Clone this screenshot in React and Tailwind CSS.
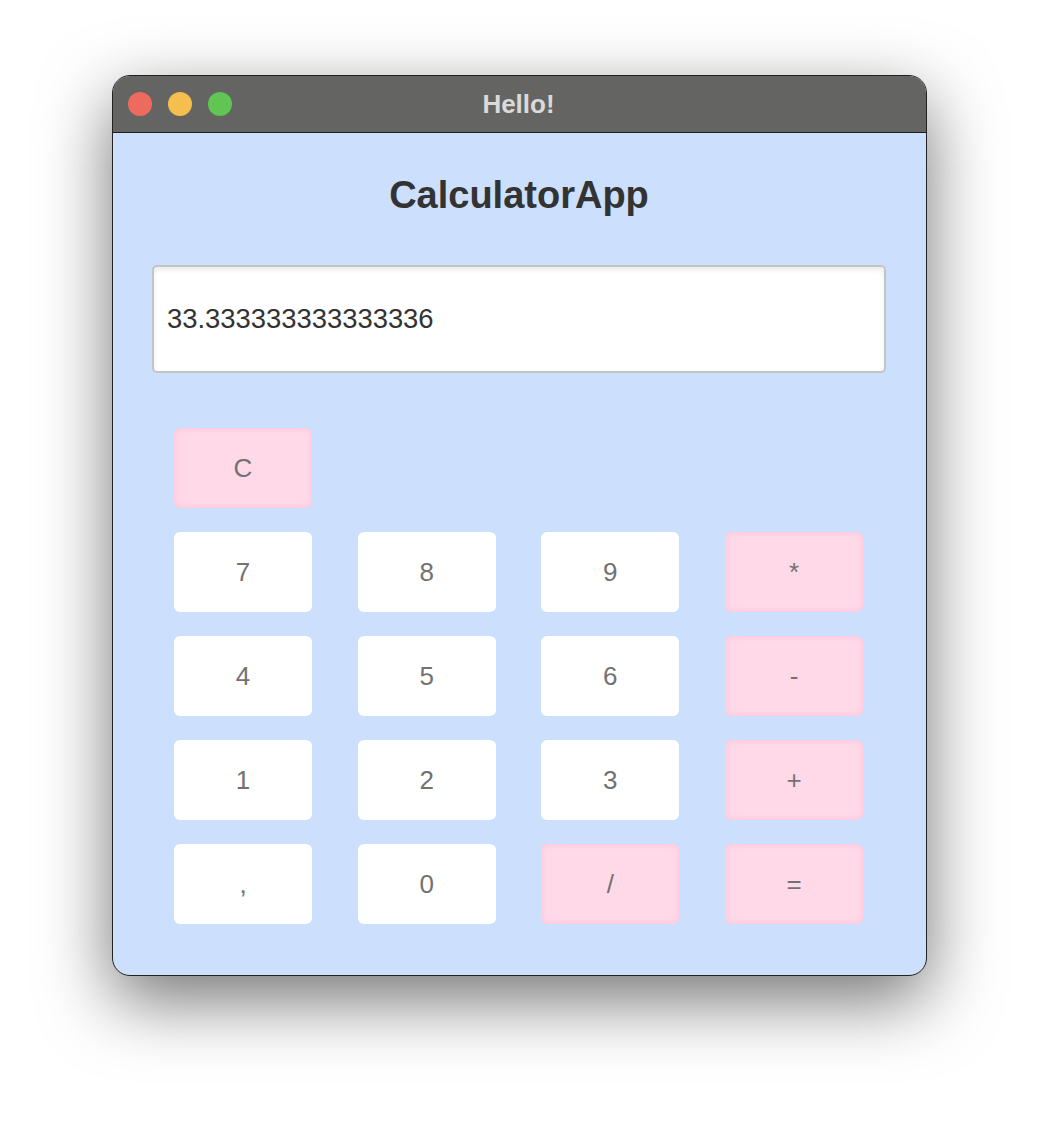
import React from "react";

const keys = [
  ["C", "op"],
  null,
  null,
  null,
  ["7", "num"],
  ["8", "num"],
  ["9", "num"],
  ["*", "op"],
  ["4", "num"],
  ["5", "num"],
  ["6", "num"],
  ["-", "op"],
  ["1", "num"],
  ["2", "num"],
  ["3", "num"],
  ["+", "op"],
  [",", "num"],
  ["0", "num"],
  ["/", "op"],
  ["=", "op"],
];

function Key({ label, kind }) {
  const base =
    "h-[80px] w-[138px] rounded-[6px] flex items-center justify-center text-[26px] text-[#727272]";
  if (kind === "op") {
    return (
      <div className={base + " bg-[#ffd9e8] shadow-[inset_0_0_6px_rgba(255,190,215,0.9)]"}>
        {label}
      </div>
    );
  }
  return <div className={base + " bg-white"}>{label}</div>;
}

function App() {
  return (
    <div
      className="w-[1038px] h-[1124px] bg-white pt-[75px] pl-[112px]"
      style={{ fontFamily: "'Liberation Sans', Arial, sans-serif" }}
    >
      <div className="w-[815px] h-[901px] rounded-[18px] border border-[#222] overflow-hidden bg-[#cce0fe] shadow-[0_24px_70px_rgba(0,0,0,0.55)] flex flex-col">
        <div className="h-[57px] bg-[#646462] border-b border-[#1e1e1e] relative flex items-center justify-center">
          <div className="absolute left-[15px] top-[16px] flex gap-[16px]">
            <div className="w-[24px] h-[24px] rounded-full bg-[#ee6a5e]" />
            <div className="w-[24px] h-[24px] rounded-full bg-[#f5bf4f]" />
            <div className="w-[24px] h-[24px] rounded-full bg-[#61c554]" />
          </div>
          <span className="text-[26px] font-bold text-[#dadada] pr-[2px]">Hello!</span>
        </div>
        <div className="flex-1 flex flex-col pl-[39px] pr-[40px]">
          <h1 className="mt-[40px] h-[44px] leading-[44px] text-center text-[38px] font-bold text-[#333]">
            CalculatorApp
          </h1>
          <div className="mt-[48px] h-[108px] rounded-[5px] border-2 border-[#c4c4c4] bg-white shadow-[inset_0_3px_5px_rgba(0,0,0,0.08)] flex items-center pl-[13px] text-[27.4px] text-[#333]">
            33.333333333333336
          </div>
          <div className="mt-[55px] ml-[22px] mr-[23px] grid grid-cols-[repeat(4,138px)] justify-between">
            {keys.map((k, i) => (
              <div key={i} className={i >= 4 ? "mt-[24px]" : ""}>
                {k ? <Key label={k[0]} kind={k[1]} /> : null}
              </div>
            ))}
          </div>
        </div>
      </div>
    </div>
  );
}

export default App;
